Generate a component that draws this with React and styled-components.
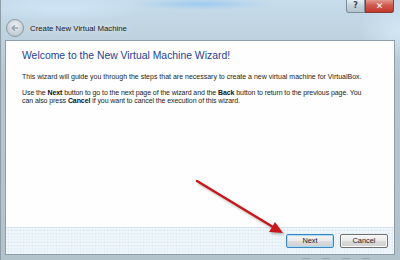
import React from 'react';
import styled, { createGlobalStyle } from 'styled-components';

const GlobalStyle = createGlobalStyle`
  html, body {
    margin: 0;
    padding: 0;
    width: 400px;
    height: 260px;
    overflow: hidden;
    background: #b9c8d1;
  }
`;

const Window = styled.div`
  width: 400px;
  height: 260px;
  box-sizing: border-box;
  display: flex;
  flex-direction: column;
  border-left: 1px solid #8d9ea8;
  background:
    radial-gradient(ellipse 90px 14px at 60px 8px, #cfe4f5 0%, rgba(207,228,245,0) 100%),
    radial-gradient(ellipse 70px 6px at 200px 4px, #9fcbef 0%, rgba(159,203,239,0) 100%),
    radial-gradient(ellipse 40px 30px at 398px 30px, #d2e6f4 0%, rgba(210,230,244,0) 100%),
    linear-gradient(180deg, #c6dcec 0%, #b6c7d0 30%, #b3c3cc 100%);
  font-family: "Liberation Sans", Arial, sans-serif;
  position: relative;
`;

const TitleBar = styled.div`
  height: 40px;
  display: flex;
  align-items: flex-end;
  padding: 0 0 3px 5px;
  box-sizing: border-box;
  gap: 6px;
`;

const BackCircle = styled.div`
  width: 16px;
  height: 16px;
  border-radius: 50%;
  border: 1px solid #8c9aa4;
  background: radial-gradient(circle at 50% 35%, #eef2f5 0%, #bcc7cf 80%);
  display: flex;
  align-items: center;
  justify-content: center;
`;

const TitleText = styled.span`
  font-size: 7.8px;
  color: #1a1a1a;
  line-height: 17px;
  text-shadow: 0 0 6px rgba(255,255,255,0.9);
`;

const Caption = styled.div`
  position: absolute;
  top: 0;
  right: 6px;
  display: flex;
  height: 13px;
`;

const CapButton = styled.div`
  width: ${p => p.$w}px;
  height: 13px;
  box-sizing: border-box;
  border: 1px solid ${p => (p.$red ? '#8a3a33' : '#7d8d98')};
  border-top: none;
  border-radius: ${p => (p.$red ? '0 0 3px 0' : '0 0 0 3px')};
  background: ${p => (p.$red
    ? 'linear-gradient(180deg, #e39a8f 0%, #cf5a4c 45%, #c3382b 100%)'
    : 'linear-gradient(180deg, #e6eef4 0%, #c3d1db 50%, #b4c5d1 100%)')};
  color: ${p => (p.$red ? '#fff' : '#3c4a55')};
  font-family: "DejaVu Sans", sans-serif;
  font-size: ${p => (p.$red ? 9 : 8)}px;
  font-weight: bold;
  display: flex;
  align-items: center;
  justify-content: center;
  line-height: 1;
`;

const Panel = styled.div`
  flex: 1;
  margin: 0 5px 5px 4px;
  border: 1px solid #8e9eaa;
  display: flex;
  flex-direction: column;
`;

const Content = styled.div`
  flex: 1;
  background: #fdfefd;
  padding: 6px 16px 0 16px;
`;

const Heading = styled.h1`
  margin: 0;
  font-size: 10.4px;
  font-weight: normal;
  color: #1f4295;
  line-height: 17px;
  white-space: nowrap;
`;

const Para = styled.p`
  margin: ${p => p.$top}px 0 0 0;
  font-size: 7px;
  line-height: 8.6px;
  color: #1c1c1c;
  white-space: nowrap;
  letter-spacing: ${p => p.$tight ? -0.08 : 0}px;

  b {
    color: #111;
  }
`;

const Footer = styled.div`
  height: 26px;
  border-top: 1px solid #d3e2ec;
  background-color: #e7f1f8;
  background-image:
    radial-gradient(circle at 1px 1px, #ffffff 0.6px, transparent 0.8px),
    radial-gradient(circle at 2px 2px, #d6e8f4 0.6px, transparent 0.8px);
  background-size: 3px 3px, 4px 4px;
  display: flex;
  align-items: center;
  justify-content: flex-end;
  gap: 6px;
  padding: 0 6px 0 0;
`;

const Button = styled.button`
  width: 48px;
  height: 14px;
  box-sizing: border-box;
  padding: 0;
  border: 1px solid ${p => (p.$focus ? '#3d86c0' : '#707070')};
  border-radius: 2px;
  background: linear-gradient(180deg, #f4f4f4 0%, #ebebeb 50%, #dcdcdc 52%, #d0d0d0 100%);
  box-shadow: inset 0 0 0 1px ${p => (p.$focus ? '#a9dcf6' : '#fafafa')};
  font-family: "Liberation Sans", Arial, sans-serif;
  font-size: 7.4px;
  color: #1a1a1a;
  line-height: 12px;
`;

const Arrow = styled.svg`
  position: absolute;
  left: 0;
  top: 0;
  pointer-events: none;
`;

const Grip = styled.div`
  position: absolute;
  bottom: 1px;
  right: 30px;
  display: flex;
  gap: 12px;
`;

const GripMark = styled.span`
  width: 8px;
  height: 1px;
  background: #9aa8b2;
`;

export default function App() {
  return (
    <>
      <GlobalStyle />
      <Window>
        <TitleBar>
          <BackCircle>
            <svg width="10" height="10" viewBox="0 0 10 10">
              <path d="M8 5H2.5M5 2.2L2.2 5L5 7.8" stroke="#9aa6ae" strokeWidth="1.6" fill="none" />
            </svg>
          </BackCircle>
          <TitleText>Create New Virtual Machine</TitleText>
        </TitleBar>
        <Caption>
          <CapButton $w={19}>?</CapButton>
          <CapButton $w={29} $red>✕</CapButton>
        </Caption>
        <Panel>
          <Content>
            <Heading>Welcome to the New Virtual Machine Wizard!</Heading>
            <Para $top={9}>
              This wizard will guide you through the steps that are necessary to create a new virtual machine for VirtualBox.
            </Para>
            <Para $top={7} $tight>
              Use the <b>Next</b> button to go to the next page of the wizard and the <b>Back</b> button to return to the previous page. You
              <br />
              can also press <b>Cancel</b> if you want to cancel the execution of this wizard.
            </Para>
          </Content>
          <Footer>
            <Button $focus>Next</Button>
            <Button>Cancel</Button>
          </Footer>
        </Panel>
        <Grip>
          <GripMark />
          <GripMark />
          <GripMark />
          <GripMark />
        </Grip>
        <Arrow width="400" height="260" viewBox="0 0 400 260">
          <defs>
            <filter id="sh" x="-20%" y="-20%" width="140%" height="140%">
              <feGaussianBlur stdDeviation="1.2" />
            </filter>
          </defs>
          <g opacity="0.35" filter="url(#sh)" transform="translate(1.5,2)">
            <line x1="196" y1="181" x2="272" y2="227" stroke="#555" strokeWidth="2.6" />
            <polygon points="282,233 268,232 274,222" fill="#555" />
          </g>
          <line x1="196" y1="181" x2="272" y2="227" stroke="#c8161b" strokeWidth="2.4" strokeLinecap="round" />
          <polygon points="282,233 268,232 274,222" fill="#c8161b" />
        </Arrow>
      </Window>
    </>
  );
}
